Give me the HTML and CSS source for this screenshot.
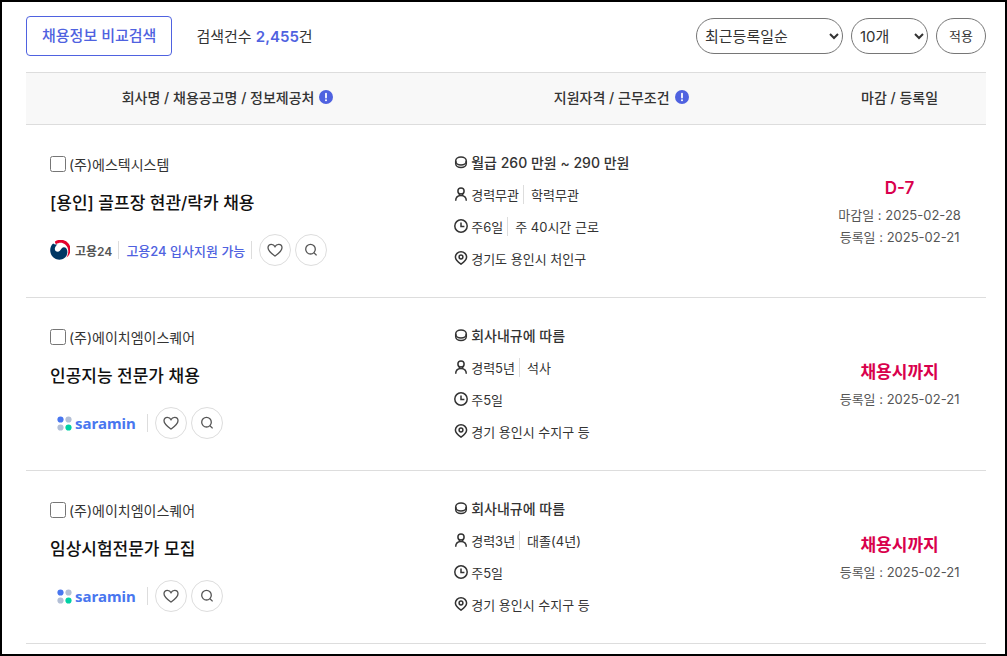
FILE: index.html
```html
<!DOCTYPE html>
<html lang="ko">
<head>
    <meta charset="UTF-8">
    <meta name="viewport" content="width=device-width, initial-scale=1.0">
    <title>채용정보</title>
    <link rel="stylesheet" href="styles.css">
</head>
<body>
    <!-- shared icons -->
    <svg class="sprite" aria-hidden="true">
        <symbol id="icon-info" viewBox="0 0 14 14">
            <circle cx="7" cy="7" r="7" fill="#4f62e0"/>
            <path d="M7 3.6v4" stroke="#fff" stroke-width="1.8" stroke-linecap="round"/>
            <circle cx="7" cy="10.3" r="1" fill="#fff"/>
        </symbol>
        <symbol id="icon-pay" viewBox="0 0 14 14">
            <ellipse cx="7" cy="6" rx="5.3" ry="4"/>
            <path d="M1.7 6v2.600c0 2.300 2.300 4 5.300 4s5.300-1.700 5.300-4V6"/>
        </symbol>
        <symbol id="icon-person" viewBox="0 0 14 14">
            <circle cx="7" cy="4" r="3.100"/>
            <path d="M1.700 13.800c0-3.600 2-5.400 5.300-5.400s5.300 1.800 5.300 5.400M5.400 6.600v1.600M8.600 6.600v1.600"/>
        </symbol>
        <symbol id="icon-clock" viewBox="0 0 14 14">
            <circle cx="7" cy="7" r="6.2"/>
            <path d="M7 3.5v4h3.4"/>
        </symbol>
        <symbol id="icon-pin" viewBox="0 0 14 14">
            <path d="M7 13.200C4 11.200 1.400 9.200 1.400 6.100a5.600 5.300 0 0 1 11.200 0C12.600 9.200 10 11.200 7 13.200z"/>
            <circle cx="7" cy="6" r="1.9"/>
        </symbol>
        <symbol id="icon-heart" viewBox="0 0 16 16">
            <path d="M8 14C5.500 12.200 1 9.200 1 5.700 1 3.600 2.500 2.300 4.300 2.300 6 2.300 7.300 3.200 8 4.600c.7-1.400 2-2.300 3.700-2.300C13.500 2.300 15 3.600 15 5.700 15 9.200 10.500 12.200 8 14z"/>
        </symbol>
        <symbol id="icon-search" viewBox="0 0 16 16">
            <circle cx="7.500" cy="7.200" r="4.800"/>
            <path d="M11 10.800l2.600 2.600"/>
        </symbol>
        <symbol id="icon-gov" viewBox="0 0 20 20">
            <path d="M5 1.600A9.700 9.700 0 0 1 16.500 17.500C19.300 13 18.900 7.300 15.200 4.400 12.200 2 8.800 2.400 6 4.200 5.300 3.300 4.800 2.500 5 1.600z" fill="#e4002b"/>
            <path d="M3.200 3.600C1.200 5.200.2 7.600.2 10.200c0 5.200 4 9.500 9.200 9.500 4.600 0 8-3.400 8-7.600 0-2.800-1.400-4.800-3.600-4.800-2.900 0-2.900 4.400-6 4.400-2.200 0-3.300-1.700-2.900-3.500.3-1.500 1.200-2.800 2.600-3.800C5.700 4.800 4.100 4.600 3.200 3.600z" fill="#003764"/>
        </symbol>
        <symbol id="icon-saramin" viewBox="0 0 15 15">
            <circle cx="3.500" cy="3.500" r="3.100" fill="#4876ef"/>
            <circle cx="11.500" cy="3.500" r="3.100" fill="#b3bfd6"/>
            <circle cx="3.500" cy="11.500" r="3.100" fill="#b3bfd6"/>
            <circle cx="11.500" cy="11.500" r="3.100" fill="#00d1a4"/>
        </symbol>
    </svg>

    <div class="toolbar">
        <button type="button" class="btn-compare">채용정보 비교검색</button>
        <p class="total">검색건수 <strong>2,455</strong>건</p>
        <form class="sort">
            <select class="select-order" aria-label="정렬">
                <option>최근등록일순</option>
            </select>
            <select class="select-count" aria-label="개수">
                <option>10개</option>
            </select>
            <button type="button" class="btn-apply">적용</button>
        </form>
    </div>

    <table class="jobs">
        <thead>
            <tr>
                <th class="col-company" scope="col"><span class="head">회사명 / 채용공고명 / 정보제공처 <svg class="info"><use href="#icon-info"/></svg></span></th>
                <th class="col-cond" scope="col"><span class="head">지원자격 / 근무조건 <svg class="info"><use href="#icon-info"/></svg></span></th>
                <th class="col-date" scope="col">마감 / 등록일</th>
            </tr>
        </thead>
        <tbody>
            <tr>
                <td class="cell-company">
                    <label class="company"><input type="checkbox">(주)에스텍시스템</label>
                    <a href="#" class="title">[용인] 골프장 현관/락카 채용</a>
                    <div class="actions">
                        <span class="gov"><svg><use href="#icon-gov"/></svg>고용24</span>
                        <a href="#" class="apply-link">고용24 입사지원 가능</a>
                        <button type="button" class="btn-round" aria-label="관심"><svg><use href="#icon-heart"/></svg></button>
                        <button type="button" class="btn-round" aria-label="보기"><svg><use href="#icon-search"/></svg></button>
                    </div>
                </td>
                <td class="cell-cond">
                    <ul class="cond">
                        <li class="pay"><svg><use href="#icon-pay"/></svg>월급 260 만원 ~ 290 만원</li>
                        <li><svg><use href="#icon-person"/></svg><span>경력무관</span><span>학력무관</span></li>
                        <li><svg><use href="#icon-clock"/></svg><span>주6일</span><span>주 40시간 근로</span></li>
                        <li><svg><use href="#icon-pin"/></svg>경기도 용인시 처인구</li>
                    </ul>
                </td>
                <td class="cell-date">
                    <strong>D-7</strong>
                    <p>마감일 : 2025-02-28</p>
                    <p>등록일 : 2025-02-21</p>
                </td>
            </tr>
            <tr>
                <td class="cell-company">
                    <label class="company"><input type="checkbox">(주)에이치엠이스퀘어</label>
                    <a href="#" class="title">인공지능 전문가 채용</a>
                    <div class="actions">
                        <span class="saramin"><svg><use href="#icon-saramin"/></svg>saramin</span>
                        <button type="button" class="btn-round" aria-label="관심"><svg><use href="#icon-heart"/></svg></button>
                        <button type="button" class="btn-round" aria-label="보기"><svg><use href="#icon-search"/></svg></button>
                    </div>
                </td>
                <td class="cell-cond">
                    <ul class="cond">
                        <li class="pay"><svg><use href="#icon-pay"/></svg>회사내규에 따름</li>
                        <li><svg><use href="#icon-person"/></svg><span>경력5년</span><span>석사</span></li>
                        <li><svg><use href="#icon-clock"/></svg>주5일</li>
                        <li><svg><use href="#icon-pin"/></svg>경기 용인시 수지구 등</li>
                    </ul>
                </td>
                <td class="cell-date">
                    <strong>채용시까지</strong>
                    <p>등록일 : 2025-02-21</p>
                </td>
            </tr>
            <tr>
                <td class="cell-company">
                    <label class="company"><input type="checkbox">(주)에이치엠이스퀘어</label>
                    <a href="#" class="title">임상시험전문가 모집</a>
                    <div class="actions">
                        <span class="saramin"><svg><use href="#icon-saramin"/></svg>saramin</span>
                        <button type="button" class="btn-round" aria-label="관심"><svg><use href="#icon-heart"/></svg></button>
                        <button type="button" class="btn-round" aria-label="보기"><svg><use href="#icon-search"/></svg></button>
                    </div>
                </td>
                <td class="cell-cond">
                    <ul class="cond">
                        <li class="pay"><svg><use href="#icon-pay"/></svg>회사내규에 따름</li>
                        <li><svg><use href="#icon-person"/></svg><span>경력3년</span><span>대졸(4년)</span></li>
                        <li><svg><use href="#icon-clock"/></svg>주5일</li>
                        <li><svg><use href="#icon-pin"/></svg>경기 용인시 수지구 등</li>
                    </ul>
                </td>
                <td class="cell-date">
                    <strong>채용시까지</strong>
                    <p>등록일 : 2025-02-21</p>
                </td>
            </tr>
        </tbody>
    </table>
</body>
</html>
```
FILE: styles.css
```css
* {
    box-sizing: border-box;
}
body {
    margin: 0;
    min-height: 100vh;
    padding: 14px 19px 10px 24px;
    border: 2px solid #000;
    background: #fff;
    color: #333;
    font-family: Inter, "Noto Sans CJK KR", sans-serif;
    font-size: 13px;
}
p, ul {
    margin: 0;
    padding: 0;
}
a {
    text-decoration: none;
}
button, select, input {
    font-family: inherit;
    color: inherit;
}
.sprite {
    display: none;
}

/* toolbar */
.toolbar {
    display: flex;
    align-items: center;
    margin-bottom: 16px;
}
.btn-compare {
    height: 40px;
    padding: 0 15px 3px;
    border: 1px solid #4f62e0;
    border-radius: 4px;
    background: #fff;
    color: #4f62e0;
    font-size: 15px;
    font-weight: 500;
}
.total {
    margin-left: 24px;
    padding-bottom: 2px;
    font-size: 15px;
}
.total strong {
    color: #4f62e0;
    font-weight: 600;
}
.sort {
    display: flex;
    gap: 8px;
    margin-left: auto;
}
.sort select,
.btn-apply {
    height: 36px;
    border: 1px solid #767676;
    border-radius: 18px;
    background: #fff;
}
.sort select {
    padding: 0 4px;
    font-size: 15px;
}
.select-order {
    width: 147px;
}
.select-count {
    width: 77px;
}
.btn-apply {
    width: 50px;
    padding: 0 0 2px;
    font-size: 13px;
}

/* job list */
.jobs {
    width: 100%;
    table-layout: fixed;
    border-spacing: 0;
}
.jobs th {
    height: 53px;
    padding: 0 0 3px;
    border-top: 1px solid #ddd;
    border-bottom: 1px solid #ddd;
    background: #f8f8f8;
    font-size: 14px;
    font-weight: 500;
}
.col-company {
    width: 42%;
}
.col-cond {
    width: 40%;
}
.col-date {
    width: 18%;
}
.head {
    display: flex;
    align-items: center;
    justify-content: center;
    gap: 5px;
}
.info {
    width: 14px;
    height: 14px;
}
.jobs td {
    border-bottom: 1px solid #ddd;
}
.jobs .cell-company {
    padding: 24px 0 22px 24px;
    vertical-align: top;
}
.company {
    display: flex;
    align-items: center;
    height: 30px;
    font-size: 14px;
}
.company input {
    width: 16px;
    height: 16px;
    margin: 0 3px 0 0;
}
.title {
    display: block;
    color: #111;
    font-size: 17px;
    font-weight: 500;
    line-height: 48px;
}
.actions {
    display: flex;
    align-items: center;
    gap: 4px;
    margin-top: 7px;
}
.gov, .apply-link, .saramin {
    display: flex;
    align-items: center;
    height: 18px;
    margin-right: 3px;
    border-right: 1px solid #ddd;
}
.gov {
    gap: 5px;
    padding-right: 6px;
    color: #555;
    font-size: 12px;
    font-weight: 600;
}
.gov svg {
    width: 20px;
    height: 20px;
}
.apply-link {
    padding-right: 6px;
    color: #4f62e0;
    font-weight: 500;
}
.saramin {
    gap: 3px;
    padding: 0 11px 0 7px;
    color: #4876ef;
    font-family: "Noto Sans", sans-serif;
    font-size: 15px;
    font-weight: 700;
}
.saramin svg {
    width: 15px;
    height: 15px;
}
.btn-round {
    display: flex;
    align-items: center;
    justify-content: center;
    width: 32px;
    height: 32px;
    padding: 0;
    border: 1px solid #ddd;
    border-radius: 50%;
    background: #fff;
}
.btn-round svg {
    width: 16px;
    height: 16px;
    fill: none;
    stroke: #555;
    stroke-width: 1.3;
}
.jobs .cell-cond {
    padding: 21px 0 23px 25px;
}
.cond {
    list-style: none;
}
.cond li {
    display: flex;
    align-items: center;
    height: 32px;
}
.cond svg {
    width: 14px;
    height: 14px;
    margin-right: 3px;
    fill: none;
    stroke: #333;
    stroke-width: 1.5;
}
.cond span + span {
    margin-left: 4px;
    padding-left: 7px;
    border-left: 1px solid #ddd;
}
.cond .pay {
    font-size: 14px;
    font-weight: 500;
}
.jobs .cell-date {
    padding: 21px 0 23px;
    color: #555;
    text-align: center;
    line-height: 22px;
}
.cell-date strong {
    display: block;
    color: #d9004c;
    font-size: 17px;
    font-weight: 600;
    line-height: 32px;
}
```
